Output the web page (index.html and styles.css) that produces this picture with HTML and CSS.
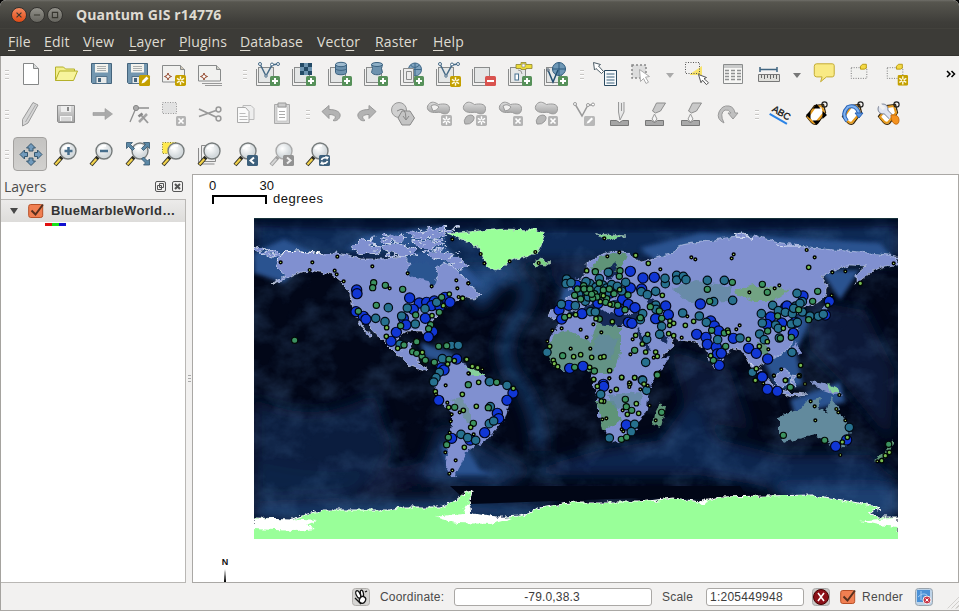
FILE: index.html
```html
<!DOCTYPE html>
<html lang="en">
<head>
<meta charset="utf-8">
<title>Quantum GIS r14776</title>
<link rel="stylesheet" href="styles.css">
</head>
<body>
<svg class="defs" aria-hidden="true">
  <defs>
    <linearGradient id="gray" x1="0" y1="0" x2="0" y2="1"><stop offset="0" stop-color="#dcdcdc"/><stop offset="1" stop-color="#a4a4a4"/></linearGradient>
    <radialGradient id="glass" cx=".4" cy=".35"><stop offset="0" stop-color="#fff"/><stop offset="1" stop-color="#d4dadd"/></radialGradient>
  </defs>
  <symbol id="plus" viewBox="0 0 10 10"><rect width="10" height="10" rx="1.5" fill="#57915a"/><path d="M5 2v6M2 5h6" stroke="#fff" stroke-width="2"/></symbol>
  <symbol id="star" viewBox="0 0 10 10"><rect width="10" height="10" rx="1.5" fill="#c4a000"/><path d="M5 1.2v7.600M1.700 3.100l6.600 3.800M8.300 3.100l-6.600 3.800" stroke="#fffbe0" stroke-width="1.300"/><circle cx="5" cy="5" r="1" fill="#c4a000"/></symbol>
  <symbol id="gstar" viewBox="0 0 10 10"><rect width="10" height="10" rx="1.500" fill="#b4b4b4"/><path d="M5 1.200v7.600M1.700 3.100l6.600 3.800M8.300 3.100l-6.600 3.800" stroke="#fff" stroke-width="1.300"/><circle cx="5" cy="5" r="1" fill="#b4b4b4"/></symbol>
  <symbol id="gx" viewBox="0 0 10 10"><rect width="10" height="10" rx="1.500" fill="#b4b4b4"/><path d="M2.500 2.500l5 5M7.500 2.500l-5 5" stroke="#fff" stroke-width="1.700"/></symbol>
  <symbol id="sheets" viewBox="0 0 36 36"><path d="M7.500 13v16.500h16" fill="none" stroke="#8a8c8c"/><rect x="9.500" y="11.500" width="15" height="15" fill="#e4e6e6" stroke="#8a8c8c"/></symbol>
  <symbol id="nodes" viewBox="0 0 36 36"><path d="M11 8l6 12 6-11 6-1" fill="none" stroke="#466a86" stroke-width="1.500"/><g fill="#fff" stroke="#466a86"><circle cx="11" cy="8" r="1.500"/><circle cx="17" cy="20" r="1.200"/><circle cx="23" cy="8.500" r="1.500"/><circle cx="29" cy="8" r="1.500"/></g></symbol>
  <symbol id="lens" viewBox="0 0 36 36"><path d="M6 29l7-8" stroke="#2c2b20" stroke-width="4"/><path d="M6.400 28.500l5-5.600" stroke="#f2d24c" stroke-width="2.200"/><circle cx="19" cy="15" r="8" fill="url(#glass)" stroke="#777c7c" stroke-width="1.400"/><path d="M14 13q3-4 7-3" fill="none" stroke="#fff" stroke-width="2"/></symbol>
  <symbol id="lensgray" viewBox="0 0 36 36"><path d="M6 29l7-8" stroke="#a0a0a0" stroke-width="4"/><path d="M6.400 28.500l5-5.600" stroke="#d5d5d5" stroke-width="2"/><circle cx="19" cy="15" r="8" fill="url(#glass)" stroke="#aaa" stroke-width="1.400"/></symbol>
  <symbol id="floppy" viewBox="0 0 36 36"><path d="M6.500 7.500h20v20h-19l-1-1z" fill="#7397b0" stroke="#45647c"/><path d="M10 8h13v8.500h-13z" fill="#f3f3ee"/><path d="M12 10.500h9M12 12.500h9M12 14.500h9" stroke="#a2a6a6" stroke-width=".9"/><path d="M11 20.500h11v7h-11z" fill="#e7eaea" stroke="#54738b"/><path d="M13 22h3v4h-3z" fill="#45647c"/></symbol>
  <symbol id="blob" viewBox="0 0 36 36"><path d="M7.500 8.500c3-4 7-2 10 0 5-1 11-1 11 4 0 5-3 6-7 5-3-2-4-1-8-1-6 0-9-4-6-8z" fill="url(#gray)" stroke="#999"/></symbol>
  <symbol id="tag" viewBox="0 0 36 36"><path d="M7.500 20.500l8-11 9-1 2 8-8 11q-3 2-6-1z" fill="#fff" stroke="#37250a" stroke-width="1.300"/><path d="M9 21l7-10 7-1 2 7-8 9.500q-2 1-4-1z" fill="none" stroke="#e69a1b" stroke-width="2"/><circle cx="25.500" cy="8.500" r="2.600" fill="none" stroke="#222" stroke-width="1.200"/></symbol>
  <symbol id="drop" viewBox="0 0 36 36"><path d="M8.500 24.500h6l3 2 3-2h6v5h-18z" fill="#a9a9a9" stroke="#777"/><path d="M19.500 7h9l-5 8-5 2-3-2z" fill="#c9c9c9" stroke="#8d8d8d"/><path d="M17.500 18l2.500 5-2.500 3-2.500-3z" fill="#f5f5f5" stroke="#999"/></symbol>
</svg>

<div class="window">
  <header class="titlebar">
    <span class="wbtn close"><svg viewBox="0 0 16 16"><path d="M5.200 5.200l5.600 5.600M10.800 5.200l-5.600 5.600"/></svg></span>
    <span class="wbtn"><svg viewBox="0 0 16 16"><path d="M4.500 8h7"/></svg></span>
    <span class="wbtn"><svg viewBox="0 0 16 16"><path d="M5 5h6v6h-6z"/></svg></span>
    <h1>Quantum GIS r14776</h1>
  </header>
  <nav class="menubar">
    <span class="m1"><u>F</u>ile</span><span class="m2"><u>E</u>dit</span><span class="m3"><u>V</u>iew</span><span class="m4"><u>L</u>ayer</span><span class="m5"><u>P</u>lugins</span><span class="m6"><u>D</u>atabase</span><span class="m7">Vect<u>o</u>r</span><span class="m8"><u>R</u>aster</span><span class="m9"><u>H</u>elp</span>
  </nav>

  <section class="toolbars">
    <div class="bar">
      <i class="grip"></i>
      <svg class="ic" viewBox="0 0 36 36"><path d="M10.500 7.500h10l5 5v16h-15z" fill="#fff" stroke="#858787"/><path d="M20.500 7.500v5h5" fill="#d7d9d9" stroke="#858787"/></svg>
      <svg class="ic" viewBox="0 0 36 36"><path d="M6.500 24.500v-13.500h8l2 2h9v3" fill="#f3ef8c" stroke="#b4b02a"/><path d="M6.500 24.500l4-9.500h18l-4 9.500z" fill="#f7f49c" stroke="#b4b02a"/></svg>
      <svg class="ic" viewBox="0 0 36 36"><use href="#floppy"/></svg>
      <svg class="ic" viewBox="0 0 36 36"><use href="#floppy"/><rect x="18" y="19" width="11" height="11" rx="1.500" fill="#c4a000"/><path d="M20.500 27.500l1-3 4-4 2 2-4 4z" fill="#fff"/></svg>
      <svg class="ic" viewBox="0 0 36 36"><path d="M5.500 9.500h18l4 4v12.500h-22z" fill="#f1f1ef" stroke="#888a8a"/><path d="M23.500 9.500v4h4" fill="#cfc8b8" stroke="#888a8a"/><path d="M11 17l1 2.500 2.500 1-2.500 1-1 2.500-1-2.500-2.500-1 2.500-1z" fill="#fff" stroke="#8a3a1c" stroke-width=".9"/><use href="#star" x="18" y="19" width="11" height="11"/></svg>
      <svg class="ic" viewBox="0 0 36 36"><path d="M12 29.500h17M9 27.500h20" stroke="#999"/><path d="M5.500 9.500h18l4 4v11.500h-22z" fill="#f1f1ef" stroke="#888a8a"/><path d="M23.500 9.500v4h4" fill="#cfd0c8" stroke="#888a8a"/><path d="M11 17l1 2.500 2.500 1-2.500 1-1 2.500-1-2.500-2.500-1 2.500-1z" fill="#fff" stroke="#8a3a1c" stroke-width=".9"/></svg>
      <i class="grip wide"></i>
      <svg class="ic" viewBox="0 0 36 36"><use href="#sheets"/><use href="#nodes"/><use href="#plus" x="21" y="20" width="10" height="10"/></svg>
      <svg class="ic" viewBox="0 0 36 36"><use href="#sheets"/><path d="M15 7h12v12h-12z" fill="#6d94b0"/><path d="M15 7h4v4h-4zM23 7h4v4h-4zM19 11h4v4h-4zM15 15h4v4h-4zM23 15h4v4h-4z" fill="#234a66"/><use href="#plus" x="21" y="20" width="10" height="10"/></svg>
      <svg class="ic" viewBox="0 0 36 36"><use href="#sheets"/><path d="M14.500 8.500v8c0 3 11 3 11 0v-8" fill="#6d92ae" stroke="#3b6280"/><ellipse cx="20" cy="8.500" rx="5.500" ry="2.200" fill="#9fbbcf" stroke="#3b6280"/><path d="M14.500 12.500c1 2.500 10 2.500 11 0" fill="none" stroke="#3b6280"/><use href="#plus" x="21" y="20" width="10" height="10"/></svg>
      <svg class="ic" viewBox="0 0 36 36"><use href="#sheets"/><path d="M14.500 8.500q2 4 0 8c2 3 9 3 11 0q-2-4 0-8" fill="#6d92ae" stroke="#3b6280"/><ellipse cx="20" cy="8.500" rx="5.500" ry="2" fill="#8fb0c7" stroke="#3b6280"/><use href="#plus" x="21" y="20" width="10" height="10"/></svg>
      <svg class="ic" viewBox="0 0 36 36"><circle cx="22" cy="13.500" r="6.500" fill="#7fa3bf" stroke="#3d6787"/><path d="M15.500 13.500h13M22 7v13M17.500 9q4 5 9 0" fill="none" stroke="#3d6787"/><path d="M7.500 14v15.500h14" fill="none" stroke="#8a8c8c"/><path d="M10.500 12.500h10v14h-10zM13.500 15.500h5v8h-5z" fill="#ececec" stroke="#8a8c8c"/><use href="#plus" x="21" y="20" width="10" height="10"/></svg>
      <svg class="ic" viewBox="0 0 36 36"><use href="#sheets"/><use href="#nodes"/><use href="#star" x="21" y="20" width="11" height="11"/></svg>
      <svg class="ic" viewBox="0 0 36 36"><use href="#sheets"/><rect x="20" y="20" width="11" height="10" rx="1.500" fill="#d9534f"/><path d="M22 25h7" stroke="#fff" stroke-width="2"/></svg>
      <svg class="ic" viewBox="0 0 36 36"><use href="#sheets"/><path d="M15 8.500h5v-2h5v2h6v4h-6v1h-5v-1h-5z" fill="#ecdc3a" stroke="#8d8430" stroke-width=".8"/><path d="M21 8h3v3h-3z" fill="#fff" stroke="#777" stroke-width=".6"/><rect x="14" y="18" width="3.500" height="6" fill="#fff" stroke="#47718f"/><path d="M17 14q4 0 4 4" fill="none" stroke="#999"/><use href="#plus" x="21" y="20" width="10" height="10"/></svg>
      <svg class="ic" viewBox="0 0 36 36"><use href="#sheets"/><circle cx="22" cy="13" r="6.500" fill="#6f98b6" stroke="#2f5b7c"/><path d="M15.500 13h13M22 6.500v13" stroke="#2f5b7c"/><path d="M11 14l5 12 5-12" fill="none" stroke="#234f70" stroke-width="1.500"/><circle cx="11" cy="14" r="1.200" fill="#fff" stroke="#456"/><use href="#plus" x="21" y="20" width="10" height="10"/></svg>
      <i class="grip mid"></i>
      <svg class="ic" viewBox="0 0 36 36"><path d="M5.500 6.500l7 2-2 1.500 5 5.500-2 2-5.500-5-1.500 1.500z" fill="#fff" stroke="#4c5c66"/><path d="M16.500 14.500h12v15h-12z" fill="#f7fafc" stroke="#2b4a60"/><path d="M18.500 18h8M18.500 21h8M18.500 24h8M18.500 27h8" stroke="#3d627c"/></svg>
      <svg class="ic" viewBox="0 0 36 36"><rect x="8" y="9" width="14" height="13" fill="#ddd" stroke="#888" stroke-dasharray="2 2" stroke-width="1.500"/><path d="M15.500 13.500l10 7-4 .7 3 5-2.500 1.300-2.500-5-3 3z" fill="#fff" stroke="#aaa"/></svg>
      <i class="caret light"></i>
      <svg class="ic" viewBox="0 0 36 36"><path d="M11 18l12-8v9h-12z" fill="#f8e36b"/><rect x="6.500" y="6.500" width="14" height="11" fill="none" stroke="#555" stroke-dasharray="1 1.500"/><path d="M19.500 18.500l8 3-2.500 1.200 4.500 4-2 2-4-4.500-1.500 2.500z" fill="#fff" stroke="#555"/></svg>
      <svg class="ic" viewBox="0 0 36 36"><path d="M8.500 8.500h19v19h-19z" fill="#f6f6f4" stroke="#8a8c8c"/><path d="M9 9h18v3h-18z" fill="#c9caca"/><path d="M10 14.500h4M16 14.500h4M22 14.500h4M10 17.500h4M16 17.500h4M22 17.500h4M10 20.500h4M16 20.500h4M22 20.500h4M10 23.500h4M16 23.500h4M22 23.500h4" stroke="#8f9191" stroke-width="1.300"/></svg>
      <svg class="ic" viewBox="0 0 36 36"><path d="M9 13.500h17M9 11v5M26 11v5" stroke="#3f6480" stroke-width="1.500"/><path d="M7.500 18.500h21v7h-21z" fill="#e0e0dc" stroke="#777"/><path d="M10.500 19v3M13.500 19v4M16.500 19v3M19.500 19v4M22.500 19v3M25.500 19v4" stroke="#666"/></svg>
      <i class="caret"></i>
      <svg class="ic one" viewBox="0 0 36 36"><path d="M10 7.500h16q2 0 2 2v9q0 2.500-2 2.500h-6l-6 5 1.500-5h-5.500q-2.500 0-2.500-2.500v-8.500q0-2.500 2.500-2.500z" fill="#f9ea84" stroke="#c2a930"/></svg>
      <svg class="ic one" viewBox="0 0 36 36"><rect x="8.500" y="11.500" width="16" height="11" fill="#f1f1ef" stroke="#777" stroke-dasharray="1 1.500"/><path d="M18 13v-3l2-2h4v4l-2 1z" fill="#f4d944" stroke="#b99b16"/></svg>
      <svg class="ic one" viewBox="0 0 36 36"><rect x="8.500" y="11.500" width="16" height="11" fill="#f1f1ef" stroke="#777" stroke-dasharray="1 1.500"/><path d="M18 13v-3l2-2h4v4l-2 1z" fill="#f4d944" stroke="#b99b16"/><use href="#star" x="19" y="19" width="11" height="11"/></svg>
      <svg class="more" viewBox="0 0 10 8"><path d="M1 1l3 3-3 3M5.500 1l3 3-3 3" fill="none" stroke="#000" stroke-width="1.500"/></svg>
    </div>

    <div class="bar">
      <i class="grip"></i>
      <svg class="ic" viewBox="0 0 36 36"><path d="M20 6.500l5 2.500-10 18-5.500 3 0-6.500z" fill="#d6d6d6" stroke="#9a9a9a"/><path d="M22.500 9l-10 17" stroke="#aaa"/></svg>
      <svg class="ic" viewBox="0 0 36 36"><path d="M8.500 9.500h17v17h-16l-1-1z" fill="url(#gray)" stroke="#8c8c8c"/><path d="M12 10h10v6h-10z" fill="#eee"/><path d="M18 11h2v4h-2z" fill="#888"/><path d="M11 20h12v5h-12z" fill="#f5f5f5"/><path d="M12 22h10M12 24h10" stroke="#bbb"/></svg>
      <svg class="ic" viewBox="0 0 36 36"><path d="M8 16.500h12v-4l7.500 5.500-7.500 5.500v-4h-12z" fill="#aaa" stroke="#999" stroke-width=".6"/></svg>
      <svg class="ic" viewBox="0 0 36 36"><path d="M9 26l6-14 13 0" fill="none" stroke="#8f8f8f" stroke-width="1.300"/><circle cx="15" cy="12" r="2.600" fill="#aaa" stroke="#888"/><path d="M18 26l8-8" stroke="#a5a5a5" stroke-width="2.500"/><path d="M20 19l7 8" stroke="#999" stroke-width="1.800"/><path d="M17.500 20.500l4-3" stroke="#888" stroke-width="2.500"/></svg>
      <svg class="ic" viewBox="0 0 36 36"><rect x="5.500" y="6.500" width="14" height="11" fill="#e2e2e2" stroke="#999" stroke-dasharray="1 1.500"/><use href="#gx" x="19" y="20" width="10" height="10"/></svg>
      <svg class="ic" viewBox="0 0 36 36"><path d="M6 13l17 8M6 20.500l17-6" stroke="#999" stroke-width="1.800"/><circle cx="25.500" cy="13.500" r="2.400" fill="none" stroke="#999" stroke-width="1.500"/><circle cx="25.500" cy="22.500" r="2.400" fill="none" stroke="#999" stroke-width="1.500"/></svg>
      <svg class="ic" viewBox="0 0 36 36"><path d="M14 9.500h8l3 3v11h-11z" fill="#eee" stroke="#bbb"/><path d="M8.500 11.500h8l3.500 4v11h-11.500z" fill="#fafafa" stroke="#aaa"/><path d="M10.500 17.500h6M10.500 20.500h8M10.500 23.500h8" stroke="#bbb"/></svg>
      <svg class="ic" viewBox="0 0 36 36"><path d="M9.500 8.500h15v19h-15z" fill="#d5d5d5" stroke="#aaa"/><path d="M12 11h10v14h-10z" fill="#fff" stroke="#bbb" stroke-width=".7"/><path d="M13 7h8v4h-8z" fill="#ccc" stroke="#999"/><path d="M14 15.500h6M14 18.500h6M14 21.500h6" stroke="#aaa"/></svg>
      <i class="grip tight"></i>
      <svg class="ic" viewBox="0 0 36 36"><path d="M9 15.500l7-6v4c8 0 12 3 11 7-1 3-4 5-7 4 4-3 3-6-4-6v4z" fill="#b3b3b3" stroke="#999"/></svg>
      <svg class="ic" viewBox="0 0 36 36"><path d="M27 15.500l-7-6v4c-8 0-12 3-11 7 1 3 4 5 7 4-4-3-3-6 4-6v4z" fill="#b3b3b3" stroke="#999"/></svg>
      <svg class="ic" viewBox="0 0 36 36"><circle cx="14" cy="14" r="7.500" fill="#d0d0d0" stroke="#999"/><path d="M17 15h8l4.500 7-4.500 7h-8l-4-7z" fill="#c4c4c4" stroke="#888"/><path d="M12 15q9-6 9 8M18 20l3 4 3-4" fill="none" stroke="#888"/></svg>
      <svg class="ic" viewBox="0 0 36 36"><use href="#blob"/><path d="M10 10q4-3 8 1-2 4-6 4z" fill="#f2f1f0" stroke="#999"/><use href="#gstar" x="20" y="19" width="11" height="11"/></svg>
      <svg class="ic" viewBox="0 0 36 36"><use href="#blob"/><path d="M14 19q5 1 2 6-3 4-8 3-2-3 1-7 2-2 5-2z" fill="#b8b8b8" stroke="#999"/><use href="#gstar" x="19" y="19" width="11" height="11"/></svg>
      <svg class="ic" viewBox="0 0 36 36"><use href="#blob"/><path d="M10 10q4-3 8 1-2 4-6 4z" fill="#f2f1f0" stroke="#999"/><use href="#gx" x="20" y="20" width="10" height="10"/></svg>
      <svg class="ic" viewBox="0 0 36 36"><use href="#blob"/><path d="M14 19q5 1 2 6-3 4-8 3-2-3 1-7 2-2 5-2z" fill="#b8b8b8" stroke="#999"/><use href="#gx" x="19" y="20" width="10" height="10"/></svg>
      <svg class="ic" viewBox="0 0 36 36"><path d="M10 8l7 12 6-11h5" fill="none" stroke="#999" stroke-width="1.500"/><circle cx="10" cy="8" r="1.500" fill="#fff" stroke="#999"/><circle cx="23" cy="9" r="1.500" fill="#fff" stroke="#999"/><circle cx="28" cy="8.500" r="1.500" fill="#fff" stroke="#999"/><rect x="19" y="20" width="11" height="10" rx="1.500" fill="#b8b8b8"/><path d="M21.500 27.500l1-2 4-4 1.500 1.500-4 4z" fill="#fff"/></svg>
      <svg class="ic" viewBox="0 0 36 36"><path d="M9.500 24.500h6l3 2 3-2h6v5h-18z" fill="#a5a5a5" stroke="#777"/><path d="M17.500 6v10l1.500 8 4-8v-10M20.500 7v8" fill="#e8e8e8" stroke="#999"/></svg>
      <svg class="ic" viewBox="0 0 36 36"><use href="#drop"/></svg>
      <svg class="ic" viewBox="0 0 36 36"><use href="#drop"/></svg>
      <svg class="ic" viewBox="0 0 36 36"><path d="M15 27q-8-4-5-11 3-7 10-6 5 1 6 7h3l-5 6-5-6h3q-2-4-6-3-6 3-1 13z" fill="#c0c0c0" stroke="#999"/></svg>
      <i class="grip short"></i>
      <svg class="ic" viewBox="0 0 36 36"><g transform="rotate(30 10 14)"><text x="9" y="15.500" font-family="Liberation Sans" font-size="9.500" fill="#111" stroke="#111" stroke-width=".3">ABC</text><path d="M9 19h20" stroke="#2b84e6" stroke-width="2"/></g></svg>
      <svg class="ic" viewBox="0 0 36 36"><use href="#tag"/><path d="M17.500 8l4 4.500h-8zM17.500 29l4-4.500h-8zM7 19l4.500-4v8zM28 19l-4.500-4v8z" fill="#000"/></svg>
      <svg class="ic" viewBox="0 0 36 36"><use href="#tag"/><path d="M12 25q-6-7 1-14 8-3 11 6" fill="none" stroke="#2760b4" stroke-width="4"/><path d="M12 25q-6-7 1-14 8-3 11 6" fill="none" stroke="#7fb2f0" stroke-width="2"/><path d="M20 17h8l-4 5z" fill="#5b96e4" stroke="#2760b4"/></svg>
      <svg class="ic" viewBox="0 0 36 36"><use href="#tag"/><path d="M12 13l8 8" stroke="#7c8496" stroke-width="6"/><circle cx="12" cy="13" r="5" fill="#dfe4f1" stroke="#7c8496"/><path d="M12 13l8 8" stroke="#dfe4f1" stroke-width="4.500"/><path d="M8 8l5 5" stroke="#f2f1f0" stroke-width="3.500"/><path d="M20 19q8-1 8 5 0 5-4 4-4-2-4-9z" fill="#f5921e" stroke="#c86e10"/></svg>
    </div>

    <div class="bar">
      <i class="grip"></i>
      <span class="pressed"><svg class="ic" viewBox="0 0 36 36"><path d="M18 7.500l4.500 4.500h-2.500v3h-4v-3h-2.500zM18 29.500l4.500-4.500h-2.500v-3h-4v3h-2.500zM7 18.500l4.500-4.500v2.500h3v4h-3v2.500zM29 18.500l-4.500-4.500v2.500h-3v4h3v2.500z" fill="#719abc" stroke="#35566e"/></svg></span>
      <svg class="ic" viewBox="0 0 36 36"><use href="#lens"/><path d="M19.500 11v8M15.500 15h8" stroke="#466e8c" stroke-width="2.500"/></svg>
      <svg class="ic" viewBox="0 0 36 36"><use href="#lens"/><path d="M15 15h8" stroke="#466e8c" stroke-width="2.500"/></svg>
      <svg class="ic" viewBox="0 0 36 36"><use href="#lens"/><path d="M5.500 6.500h6l-2 2 4 4-2 2-4-4-2 2zM28.500 6.500h-6l2 2-4 4 2 2 4-4 2 2zM28.500 29h-6l2-2-4-4 2-2 4 4 2-2z" fill="#5c88a6" stroke="#31546c" stroke-width=".8"/></svg>
      <svg class="ic" viewBox="0 0 36 36"><rect x="5.500" y="6.500" width="14" height="11" fill="#ffe94e" stroke="#8c842f" stroke-dasharray="1 1.500"/><use href="#lens"/></svg>
      <svg class="ic" viewBox="0 0 36 36"><path d="M5.500 12v16h16M8.500 9.500h14v16h-14z" fill="#eee" stroke="#8a8a8a"/><use href="#lens"/></svg>
      <svg class="ic" viewBox="0 0 36 36"><use href="#lens"/><rect x="18" y="19" width="11" height="11" rx="1.500" fill="#3d607c"/><path d="M25 21.500l-3.500 3 3.500 3" fill="none" stroke="#fff" stroke-width="2"/></svg>
      <svg class="ic" viewBox="0 0 36 36"><use href="#lensgray"/><rect x="18" y="19" width="11" height="11" rx="1.500" fill="#929292"/><path d="M22 21.500l3.500 3-3.500 3" fill="none" stroke="#eee" stroke-width="2"/></svg>
      <svg class="ic" viewBox="0 0 36 36"><use href="#lens"/><rect x="18" y="19" width="11" height="11" rx="1.500" fill="#3d607c"/><path d="M20.500 24q1-3 5-2M26.500 25q-1 3-5 2" fill="none" stroke="#fff" stroke-width="1.600"/><path d="M24 20l4 1-2 3zM23 29l-4-1 2-3z" fill="#fff"/></svg>
    </div>
  </section>

  <main class="work">
    <aside class="dock">
      <div class="dockhead"><span>Layers</span>
        <svg class="dbtn" viewBox="0 0 11 11"><rect x=".5" y=".5" width="10" height="10" rx="1.500"/><path d="M4.500 2.500h4v4h-4zM2.500 4.500h4v4h-4z"/></svg>
        <svg class="dbtn" viewBox="0 0 11 11"><rect x=".5" y=".5" width="10" height="10" rx="1.500"/><path d="M3 3l5 5M8 3l-5 5" stroke-width="2"/></svg>
      </div>
      <div class="tree">
        <div class="row"><i class="twist"></i><svg class="check" viewBox="0 0 16 16"><rect x=".7" y="1.500" width="14" height="13" rx="2" fill="#f07f52" stroke="#b75028"/><path d="M3.500 7.500l4 4 7.500-10" fill="none" stroke="#59301e" stroke-width="2"/></svg><b>BlueMarbleWorld…</b></div>
        <div class="rgb"><i class="r"></i><i class="g"></i><i class="b"></i></div>
      </div>
    </aside>
    <div class="splitter"><i></i><i></i><i></i></div>
    <section class="canvas">
      <div class="scalebar"><div class="nums"><span>0</span><span>30</span></div><div class="rule"><i></i><span>degrees</span></div></div>
      <svg class="map" viewBox="254 218 644 321">
        <defs>
          <filter id="rough" x="-5%" y="-5%" width="110%" height="110%"><feTurbulence type="fractalNoise" baseFrequency=".18" numOctaves="3" seed="4"/><feDisplacementMap in="SourceGraphic" scale="6" xChannelSelector="R" yChannelSelector="G"/></filter>
          <filter id="broken" x="-5%" y="-5%" width="110%" height="110%"><feTurbulence type="fractalNoise" baseFrequency=".11 .2" numOctaves="3" seed="9"/><feDisplacementMap in="SourceGraphic" scale="17" xChannelSelector="R" yChannelSelector="G"/></filter>
          <filter id="soft"><feGaussianBlur stdDeviation="7"/></filter>
          <filter id="soft2"><feGaussianBlur stdDeviation="2"/></filter>
          <filter id="sea" x="0" y="0" width="100%" height="100%"><feTurbulence type="fractalNoise" baseFrequency=".03 .035" numOctaves="5" seed="11"/><feColorMatrix values="0 0 0 0 .08  0 0 0 0 .2  0 0 0 0 .42  1.500 0 0 0 -.6"/></filter>
        </defs>
        <rect x="254" y="218" width="644" height="321" fill="#020718"/>
        <g filter="url(#soft)" fill="#112b58">
          <path d="M254 222h644v40h-644z" opacity=".95"/>
          <path d="M254 398q60 30 120-5l20 60-40 40-100 5z" opacity=".6"/>
          <path d="M254 460q90 25 200-5l10 20-210 45z" opacity=".4"/>
          <path d="M500 275q45 5 20 38-28 40-2 68 22 30 22 70" fill="none" stroke="#1a3d70" stroke-width="13" opacity=".8"/>
          <path d="M455 265h65l-40 45z" fill="#1b447c"/>
          <path d="M545 270h50l-25 30z" opacity=".8"/>
          <path d="M530 470l70-20 60-10 30-40 30 40 60 15 90 0 28 30v25l-80-15-120-20-160 0z" opacity=".85"/>
          <path d="M670 350l60 20 20 60-60-10zM805 300l60 10 30 60-5 70-50-60-30-30z" opacity=".5"/>
          <path d="M440 425l-20 55 80 10 30-20z" fill="#1b447c" opacity=".6"/>
          <path d="M254 506l200-8 100 8 0 14h-300zM770 485l128 0v35h-40l-80-25z" fill="#1d4377" opacity=".9"/>
        </g>
        <rect x="254" y="218" width="644" height="321" filter="url(#sea)" opacity=".4"/>
        <path d="M254 218h644v8q-300 10-644 0z" fill="#020a2b" opacity=".6" filter="url(#soft2)"/>
        <path d="M450 486h290l10 14-110-2-170 6z" fill="#010616"/>
        <g filter="url(#soft2)" fill="#2a5290">
          <path d="M254 253l30-14 30 14-30 30-30-10zM404 255l40-10 40 40-50 12-30-18zM345 250l20-14 80-10v20zM420 342l30 10 15 14-40-8zM440 445l25 0 15 25 20 5-50 0zM555 315l10-30 40 0-8 22zM640 248l60-15 180 10 18 20-240 0zM820 270l40 0-20 30zM760 355l35-10 8 40-25 5zM800 310l10 10-15 35-15 0zM790 400l50-18 5 20-50 13zM640 255l55-15 5 12z"/>
        </g>
        <g class="land" filter="url(#broken)" stroke="#eef4fd" stroke-width=".8">
          <path d="M352 249l8-10 14-1-4 7 14 2-6 5-15 2zM379 238l12-3 14 1-6 5-17 1zM384 246l12-3 14 3 8 8-14 3-16-4zM410 233l22-4 24-1-10 6-13 5-20-1zM412 241l14 1 12-3 8 4-14 5-18-2z"/>
          <path d="M424 251l14-2 16 6 15 11-12 3-12-8-12-3z"/>
          <path d="M254 247l12 3 16 4-5 3-14-3-9-2z"/>
        </g>
        <g class="land" filter="url(#rough)">
          <g stroke="#e4edfa" stroke-width=".9">
            <path d="M276 262l8-10 16-1 22 3 15-1 15 3 10 3 18 0 25-2 5 6-4 9 9 5 13 3 4 7 5-9-1-10 8-6 11 6 7 7 8 10 11 10-9 4-10-2-4 3-10 6-8 7-6 6-7 9 1 10-2 3-4-10-15 0-10 7-2 5 8 6 5-6 5-1-3 8 8 3-1 9 10 6-4 3-13-5-15-13-10-10-15-16-9-9 3 10 8 9-5-2-8-14-5-8-2-10-3-13-8-8-10-8-17-3-13 1-10 5-20 7 15-8-5-4-5-5z" stroke-width=".6"/>
            <path d="M587 270l0-7 13-8 13-4 15 2 12 9 10-2 15-5 10-2 3-7 8-2 16-2 23-4 32-2 18 6 15 2 20 4 25 2 25 2 37 4v9l-12 1-15 7-8 6-6 5 0-9 10-9-17-1-15 5-13 6 6 9-2 12-8 6-12 4-8 4-2 9 4 10-5 7-3 10-11 8-10 4-7 5-4 2 5 12-10-6-7-14-6-8-9-2-10 11-6 11-6-10-5-12-10-6-16-2-8-4 3 10-14 13-13 8-7-13-9-20 2-12-10 3-12-6-8 5-7-10-10-5-5 10-8-9-12 5-8 5-6-4 4-6 13-2-2-5 8-7 12-5 4-6-6-5z" stroke-width=".5"/>
            <path d="M735 234l8-1 10 5-16-1zM776 245l12 1 17 0"/>
          </g>
          <path d="M407 272l3-8 7-3 9 1 8 4 3 8-2 10-3 4-4-7-12-3-8-3z" fill="#2c5490"/>
          <path d="M276 262l8-10 16-1 22 3" fill="none" stroke="#fff" stroke-width="1"/>
          <g>
            <path d="M437 362l8-3 10 4 11 2 6 7 13 4 5 6 18 3 7 6-5 11-3 10-3 9-12 13-7 8-10 4-9 7-5 11-5 9 3 4-10-2-4-6 2-14 2-14 3-16 0-12-11-10-5-11-2-8 5-9z"/>
            <path d="M562 320l13-5 20-1 6 8 19 4 17-2 7 16 8 15 6 4 11-2-9 14-9 13-3 14-1 12-6 9-6 12-9 9-13 4-7-12-8-17 0-15-5-15-2-12-7-5-13 2-10 1-11-11-3-10 3-13 6-9z"/>
            <path d="M570 291l2-11 7-2 2 8-4 4z"/>
            <path d="M750 362l15 15 10 11-4 1-15-16zM773 378l11-9 6 4-5 14-8-1zM792 374l8 1-7 4 3 8-5-3zM770 390l25 3 12 1-15 2z" stroke="#dfe8f8" stroke-width=".6"/>
            <path d="M817 320l8-15 6-6-3 8-5 10z" fill="#7089c0"/>
            <path d="M796 342l5 10-3 4-5-10z"/>
          </g>
          <g fill="#5e9478">
            <path d="M590 269l10-12 13-4 14 1-4 10-8 10-10-5-13 5z"/>
            <path d="M546 350l9-17 13-3 22 13 7-20 24 4v26l-8 20-23 0-7-5-13 2-10 1-11-11z" opacity=".85"/>
            <path d="M597 400l18 1 6 20-18 10zM660 403l6 4-5 20-8-2 2-12z"/>
            <path d="M735 290l20-5 35 5-16 11-20 0-18-6z" fill="#72a383"/>
            <path d="M810 381l15 2 18 11-8 1-12-4z" fill="#8293c7"/>
            <path d="M827 383l10 5 3 5-8 0zM466 367l13 4 7 5-13 0z" fill="#86cf9b"/>
            <path d="M875 460l10-8 7-13 2 7-8 11-8 5z"/>
            <path d="M450 400l12-3 8 18 4 8-7-1-8-13z" opacity=".5"/>
            <path d="M758 342l10 4 0 14-8-8z"/>
          </g>
          <g fill="#628a9d">
            <path d="M779 418l7-5 12-3 8-9 15-4-2 11 7 4 5-15 6 10 8 13 5 9-2 15-11 5-10-8-12-6-17 4-14 3-5-7z"/>
            <path d="M672 288l25-8 35 7-4 14-40 2zM598 335l20 4-8 20-20-3zM607 395l35-3-2 12-25 4z" opacity=".8"/>
          </g>
          <g fill="#122c58">
            <path d="M576 314l8-6 8-5 8 5 8 6 6-1 10 1 14 0-1 8-15 2-10 2-12-2-5-8zM612 301l10-3 14 5-8 4-14-1zM606 279l3-10 6-8 2 3-4 8 8-1-4 4-8 5zM637 325l5 8 9 17-3 3-9-15zM656 330l8 6 6 4-4 3-8-7zM648 297l6 2 2 10-5 0-3-8z"/>
          </g>
          <g fill="#99ff99" stroke="#e7ffe9" stroke-width=".6">
            <path d="M448 234l30-3 27-2 30 1 10 3-4 12-4 8-12 4-17 4-6 7-6 3-8-4-5-9-5-12-12-5z"/>
            <path d="M533 262l8-3 10 3-6 4-9-1zM596 235l15-1 14 2-16 4z" opacity=".8"/>
          </g>
        </g>
        <path d="M254 518l38 1 20-6 12-3h66l12-3 38 0 15-6 9-8 8-2-3 14 2 8 19 5 30-2 20-8 35-6h65l33-4 27 4 20-5 92-2 30 5 30 6 8 3-12 4 10 4h20v22h-644z" fill="#99ff99" stroke="#fff" filter="url(#rough)"/>
        <path d="M254 519l38 0 24 2-10 4 10 4-20 2-42-2zM435 517l28-4 5-10 3 9 22 4 20 2-22 6-35-1-15-4zM860 521l38-4v10l-20-2zM698 502l6-4 4 5-6 2z" fill="#fff" filter="url(#rough)"/>
        <path d="M254 532h644v7h-644z" fill="#99ff99"/>
        <path d="M254 218.500h644" stroke="#16313a"/>
        <g id="cities"></g>
      </svg>
      <div class="north"><span>N</span><svg viewBox="0 0 4 13"><path d="M2 0l1 13h-2z" fill="#000"/></svg></div>
    </section>
  </main>

  <footer class="status">
    <svg class="sbtn" viewBox="0 0 18 18"><rect x=".5" y=".5" width="17" height="17" rx="3" fill="#d5d4d2" stroke="#b0aeab"/><g stroke="#111" stroke-width="1.300" fill="#fff"><ellipse cx="6" cy="6.500" rx="2" ry="4" transform="rotate(-25 6 6)"/><ellipse cx="10" cy="5.500" rx="1.500" ry="3.500" transform="rotate(-10 10 6)"/><ellipse cx="11" cy="12" rx="3" ry="3.500" transform="rotate(30 11 11)"/><path d="M3 10l6 6M13 4l2-1" /></g></svg>
    <span class="lc">Coordinate:</span>
    <span class="field coord">-79.0,38.3</span>
    <span class="ls">Scale</span>
    <span class="field scale">1:205449948</span>
    <svg class="sbtn stop" viewBox="0 0 18 18"><rect x=".5" y=".5" width="17" height="17" rx="3" fill="#c9c8c6" stroke="#aaa"/><circle cx="9" cy="9" r="7.500" fill="#8c1018" stroke="#400"/><path d="M6 5l6 8M12 5l-6 8" stroke="#fff" stroke-width="1.600"/></svg>
    <svg class="scheck" viewBox="0 0 16 16"><rect x=".7" y="1.500" width="14" height="13" rx="2" fill="#f07f52" stroke="#b75028"/><path d="M3.500 7.500l4 4 7.500-10" fill="none" stroke="#59301e" stroke-width="2"/></svg>
    <span class="lr">Render</span>
    <svg class="sbtn last" viewBox="0 0 18 18"><rect x=".5" y=".5" width="17" height="17" rx="3" fill="#bdd3e8" stroke="#9aa4ad"/><path d="M2 2h13v12h-13z" fill="#4a90d6"/><path d="M3 9q5-5 9-2M6 3v9" fill="none" stroke="#a4cdf2"/><circle cx="12" cy="12" r="4" fill="#c8374a" stroke="#eee"/><path d="M10.500 10.500l3 3M13.500 10.500l-3 3" stroke="#fff"/></svg>
    <i class="resize"></i>
  </footer>
</div>
<script src="cities.js"></script>
</body>
</html>
```
FILE: styles.css
```css
* { box-sizing: border-box; }
body { margin: 0; background: #000; font-family: "Open Sans", "Noto Sans", sans-serif; }
.defs { position: absolute; width: 0; height: 0; }
.window { width: 959px; height: 611px; display: flex; flex-direction: column; background: #f2f1f0; border-radius: 6px 6px 0 0; overflow: hidden; }
.titlebar { flex: 0 0 28px; display: flex; align-items: center; gap: 2px; padding: 1px 0 0 11px; background: linear-gradient(#706f69 0, #57564f 2px, #3e3d39 80%, #3c3b37); }
.wbtn { width: 16px; height: 16px; border-radius: 50%; background: linear-gradient(#92918a, #65645e); border: 1px solid #33322f; }
.wbtn svg { display: block; width: 14px; height: 14px; fill: none; stroke: #37362f; stroke-width: 1.3; }
.wbtn.close { background: linear-gradient(#f58a60, #df4b16); }
.titlebar h1 { margin: 0 0 0 11px; font: bold 14px/20px "Open Sans", sans-serif; color: #dfdbd2; letter-spacing: .13px; white-space: nowrap; }
.menubar { flex: 0 0 28px; display: flex; align-items: center; padding-left: 8px; background: #3c3b37; border-top: 1px solid #42413c; border-bottom: 1px solid #33322f; color: #dfdbd2; font-size: 14px; line-height: 20px; letter-spacing: .18px; }
.menubar u { text-underline-offset: 3px; text-decoration-thickness: 1px; }
.menubar span { white-space: nowrap; }
.m1 { width: 36px; } .m2 { width: 39px; } .m3 { width: 46px; } .m4 { width: 50px; } .m5 { width: 61px; }
.m6 { width: 77px; } .m7 { width: 58px; } .m8 { width: 58px; }
.toolbars { flex: 0 0 118px; border-left: 1px solid #a5a39f; }
.bar { height: 40px; display: flex; align-items: flex-start; }
.bar:last-child { height: 38px; }
.ic { display: block; flex: 0 0 36px; height: 36px; }
.ic.one { padding-left: 1px; }
.grip { flex: 0 0 12px; height: 36px; display: block; background: repeating-linear-gradient(#c9c7c4 0 1px, #fff 1px 2px, transparent 2px 4px) 4px 14px / 4px 10px no-repeat; }
.grip.wide { flex-basis: 20px; background-position: 14px 14px; }
.grip.mid { flex-basis: 15px; background-position: 7px 14px; }
.grip.tight { flex-basis: 12px; background-position: 5px 14px; }
.grip.short { flex-basis: 18px; background-position: 10px 14px; }
.caret { flex: 0 0 19px; height: 36px; display: flex; align-items: center; justify-content: center; }
.caret::after { content: ""; border: 4px solid transparent; border-top: 5px solid #777; border-bottom: 0; margin-top: 2px; }
.caret.light::after { border-top-color: #aaa; }
.more { width: 10px; height: 8px; margin: 14px 0 0 32px; }
.pressed { flex: 0 0 36px; height: 36px; position: relative; }
.pressed::before { content: ""; position: absolute; inset: 1px 2px 1px 0; border: 1px solid #a3a19f; border-radius: 4px; background: linear-gradient(#c4c3c1, #d2d1cf); }
.pressed svg { position: relative; width: 36px; }
.work { flex: 1; min-height: 0; display: flex; }
.dock { width: 186px; display: flex; flex-direction: column; border-left: 1px solid #a5a39f; }
.dockhead { flex: 0 0 25px; display: flex; align-items: center; padding: 0 3px 0 3px; gap: 6px; font-size: 14px; color: #4c4c4c; line-height: 20px; }
.dockhead span { flex: 1; }
.dbtn { width: 11px; height: 11px; fill: none; stroke: #555; }
.tree { flex: 1; background: #fff; border: 1px solid #b9b7b4; border-left: 0; }
.row { height: 22px; display: flex; align-items: center; padding-left: 9px; background: linear-gradient(#ecebea, #dddcda); }
.twist { border: 4.5px solid transparent; border-top: 6px solid #484848; border-bottom: 0; }
.check { width: 16px; height: 16px; margin: 0 7px 0 10px; }
.row b { font: bold 13px/18px "Liberation Sans", sans-serif; color: #333; letter-spacing: .3px; white-space: nowrap; }
.rgb { display: flex; margin: 1px 0 0 44px; }
.rgb i { width: 7px; height: 3px; } .r { background: #e01010; } .g { background: #18e018; } .b { background: #1010d0; }
.splitter { width: 6px; display: flex; flex-direction: column; align-items: center; justify-content: center; gap: 2px; }
.splitter i { width: 3px; height: 1px; background: #aaa; }
.canvas { flex: 1; background: #fff; border: 1px solid #aaa8a5; display: flex; flex-direction: column; align-items: flex-start; overflow: hidden; font-family: "Liberation Sans", sans-serif; color: #111; }
.scalebar { margin: 4px 0 0 16px; height: 39px; font-size: 13px; }
.nums { display: flex; width: 65px; justify-content: space-between; line-height: 14px; }
.rule { display: flex; margin: 2px 0 0 3px; }
.rule i { width: 55px; height: 9px; border: 2px solid #000; border-bottom: 0; margin-right: 6px; }
.rule span { line-height: 13px; letter-spacing: .5px; margin-top: -3px; }
.map { display: block; flex: 0 0 321px; width: 644px; margin-left: 61px; }
.land { fill: #8090d0; }
.dot-D { fill: #b8ee68; stroke: #000; stroke-width: 1.4; }
.dot-S { fill: #78bc50; stroke: #020a05; stroke-width: 1.3; }
.dot-G { fill: #3c9260; stroke: #020a05; stroke-width: 1.2; }
.dot-T { fill: #26708e; stroke: #010c14; stroke-width: 1.2; }
.dot-B { fill: #1036d4; stroke: #01051a; stroke-width: 1.2; }
.north { margin: 18px 0 0 27px; width: 10px; display: flex; flex-direction: column; align-items: center; font: bold 9px/11px "Liberation Sans", sans-serif; }
.north svg { width: 4px; height: 13px; margin-top: 1px; flex: none; }
.status { flex: 0 0 28px; display: flex; align-items: center; padding-left: 351px; border-bottom: 1px solid #aaa8a5; border-left: 1px solid #a5a39f; font: 12px/18px "Liberation Sans", sans-serif; color: #4a4a4a; }
.sbtn { width: 18px; height: 18px; flex: none; }
.lc { width: 74px; margin-left: 10px; letter-spacing: .2px; }
.field { height: 18px; background: #fff; border: 1px solid #aaa8a5; border-radius: 3px; line-height: 16px; color: #3c3c3c; letter-spacing: .15px; }
.coord { width: 198px; text-align: center; padding-right: 2px; }
.ls { width: 44px; margin-left: 10px; letter-spacing: .2px; }
.scale { width: 98px; padding-left: 3px; letter-spacing: .25px; }
.stop { margin-left: 8px; }
.scheck { width: 16px; height: 16px; margin-left: 10px; flex: none; }
.lr { width: 53px; margin-left: 6px; letter-spacing: .3px; }
.resize { width: 12px; height: 12px; margin: 12px 0 0 14px; background: repeating-linear-gradient(135deg, transparent 0 2px, #cfcdca 2px 3px); clip-path: polygon(100% 0, 100% 100%, 0 100%); }
```
FILE: cities.js
```js
// City markers by map tile: origin, then class -> x,y pairs in thirds of a pixel.
// B = largest, T = large, G = medium, S = small, D = smallest.
const tiles = [
  { o: [250, 215],
    B: "320,225 321,236 318,290 340,304 348,313 479,249 508,264 490,283 530,262 553,258 545,272 585,247 600,262 570,275 526,310 460,310 468,330 439,352 423,379 548,350 535,366 620,432 575,458 582,465",
    T: "415,278 377,310 405,320 472,279 525,281 496,327 455,303 450,388 604,391 625,391 577,431 568,472 550,498 560,262",
    G: "371,203 368,218 406,211 458,223 379,271 325,289 497,300 452,332 542,329 536,341 575,247 568,292 462,390 500,380 488,410 500,415 516,424 526,436 553,442 566,394 590,392 597,433 134,376",
    S: "410,338 409,364 443,400 637,250 598,237 546,302 580,272 648,433 613,437 593,447 517,412",
    D: "92,142 187,142 179,165 262,125 254,167 260,178 281,199 367,154 419,220 473,175 545,214 619,196 622,220 655,205 626,246 607,73 657,476" },
  { o: [460, 215],
    B: "511,169 549,189 583,187 511,219 350,211 393,215 365,228 326,271 297,285 305,312 366,296 414,265 478,289 488,253 505,268 525,278 587,311 617,273 625,299 329,460 369,454 505,322 516,325 430,508 545,222 450,234",
    T: "445,172 418,191 320,192 318,206 333,203 390,206 428,210 440,219 455,209 497,202 472,214 485,228 544,230 562,239 587,229 616,206 615,190 650,181 650,195 376,259 346,272 304,268 392,290 406,291 548,296 587,270 605,334 599,358 560,373 261,412 557,442 547,495 88,499 541,314 440,235 588,283 378,200 408,216 415,226 356,239 385,246",
    G: "406,170 480,167 478,184 371,212 380,232 404,236 411,246 398,250 362,252 344,241 314,307 418,312 457,268 473,271 495,284 504,240 541,308 571,275 598,288 524,406 308,422 403,468 592,478 344,457 605,310 372,222 428,240 462,236 440,251 390,222 418,204 352,222 430,225 448,222 437,262 395,238",
    S: "380,167 479,224 430,242 421,260 408,311 457,320 347,299 328,302 450,268 565,145 527,121 607,241 630,318 641,325 629,331 626,356 641,362 563,358 527,361 547,387 557,411 587,411 592,424 341,425 362,419 395,427 422,427 432,425 269,394 280,436 283,446 293,455 389,457 449,467 401,494 485,488 524,488 552,507 8,250 20,433 37,454 53,458",
    D: "62,117 73,145 149,139 226,111 236,144 433,70 442,124 478,112 601,163 25,205 305,340 362,344 380,367 400,328 424,352 277,346 262,379 332,401 391,401 518,373 511,418 25,475 67,463 448,490 508,502 581,428" },
  { o: [680, 215],
    B: "61,267 369,243 448,259 436,300 272,306 261,328 305,324 345,322 317,277 321,273 50,358 78,367 82,388 109,396 92,318 103,333 116,348 160,370 206,400 229,415 263,432 247,484 118,451 112,417 340,355 124,415",
    T: "10,184 18,194 82,196 133,196 158,256 101,260 8,294 58,303 79,322 351,235 367,260 278,271 295,287 316,292 337,296 347,273 360,265 367,291 390,303 415,304 244,296 247,324 287,330 295,340 334,327 352,322 239,357 253,374 336,412 113,374 217,472 180,369 298,369 341,280 430,298",
    G: "157,202 82,223 247,208 262,232 413,229 89,259 398,259 386,314 95,346 137,394 263,348 301,370 334,367 293,303 133,354 100,436 356,284",
    S: "386,157 541,205 443,271 41,319 16,331 143,345 145,352 262,380 238,394 205,373 229,461 226,496 317,496 358,482 362,451 92,422 310,340",
    D: "34,127 46,133 161,118 155,130 380,105 404,127 457,172 496,169 641,145 208,232 284,220 298,211 455,241 179,331 169,343 22,304 265,403 281,482 304,463 250,505 5,368" },
  { o: [250, 375],
    B: "566,76 789,54 771,76 742,115 746,131 704,173 605,190 660,195",
    T: "558,8 551,21 719,20 771,31 718,146 731,138 633,178 653,188 677,196 721,95",
    G: "655,29 740,22 595,187 590,209 670,145 614,97 715,98",
    S: "637,58 686,22 556,50 596,97 640,106 679,94 662,157 643,217 790,40",
    D: "587,31 592,83 629,112 605,118 602,139 671,178 586,232 617,256 607,286 598,296 599,173 558,58" },
  { o: [570, 375],
    B: "101,34 169,150 797,214 592,43 622,49 577,6 830,195",
    T: "218,16 230,46 92,58 194,148 184,170 118,189 838,157",
    G: "166,73 169,95 185,106 154,193 275,112 640,181 764,196 956,208 661,37 170,187 262,0",
    S: "71,13 155,7 194,8 82,34 139,43 199,86 172,118 206,115 101,79 94,78 556,16 646,16 832,187 817,201 958,232 946,242 935,257 179,26",
    D: "118,10 122,49 211,43 158,106 109,130 97,133 155,163 160,169 233,32 239,92 257,136 734,94 722,79 736,136 808,60 799,102 805,112 826,136 811,240 922,259 178,36 705,27 612,2 687,2" }
];
const radius = { D: 1.4, S: 2.2, G: 3.1, T: 4.2, B: 5.1 };
const ns = "http://www.w3.org/2000/svg";
const layer = document.getElementById("cities");
for (const kind of "BTGSD") {
  for (const tile of tiles) {
    for (const pair of tile[kind].split(" ")) {
      const [x, y] = pair.split(",").map(Number);
      const c = document.createElementNS(ns, "circle");
      c.setAttribute("cx", tile.o[0] + x / 3);
      c.setAttribute("cy", tile.o[1] + y / 3);
      c.setAttribute("r", radius[kind]);
      c.setAttribute("class", "dot-" + kind);
      layer.appendChild(c);
    }
  }
}
```
